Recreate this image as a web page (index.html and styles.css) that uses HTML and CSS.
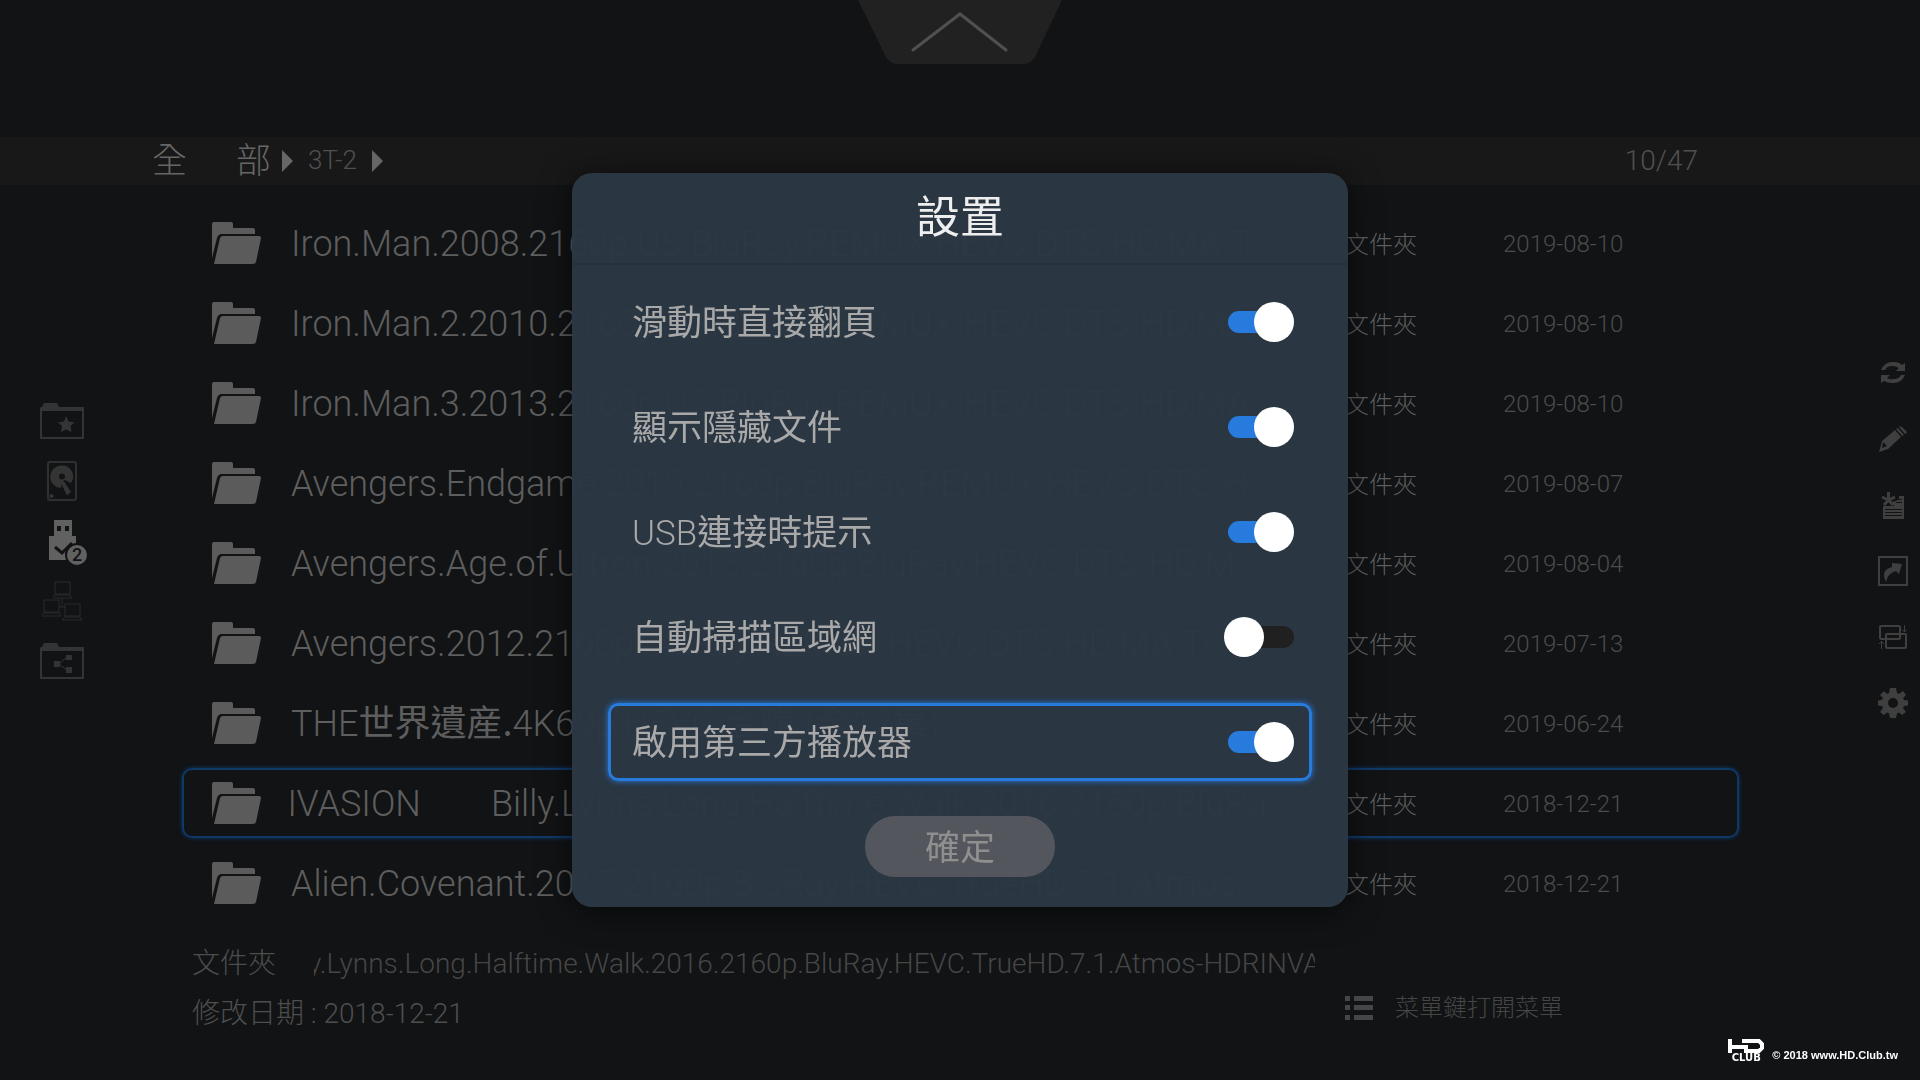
FILE: index.html
```html
<!DOCTYPE html>
<html lang="zh-Hant">
<head>
<meta charset="utf-8">
<meta name="viewport" content="width=device-width, initial-scale=1">
<title>設置</title>
<link rel="stylesheet" href="styles.css">
</head>
<body>
<svg class="sprite" aria-hidden="true">
  <symbol id="folder" viewBox="0 0 49 42">
    <path d="M2 0H19Q21 0 21 2V6H41Q43 6 43 8V12H10Q6 12 5 16L0 36V2Q0 0 2 0Z"/>
    <path d="M11 14H47Q49 14 49 16L44 40Q43 42 41 42H2L8 16Q9 14 11 14Z"/>
  </symbol>
</svg>
<div class="page">
  <button class="pull-tab" type="button" aria-label="展開">
    <svg width="204" height="64" viewBox="0 0 204 64">
      <path class="tab-shape" d="M0 0H204L177 57Q173 64 165 64H39Q32 64 28 57Z"/>
      <path class="tab-chevron" d="M55 50L102 14L148 50"/>
    </svg>
  </button>

  <header class="path">
    <nav class="crumbs">
      <a class="root" href="#"><span>全</span><span>部</span></a>
      <svg width="11" height="22" viewBox="0 0 11 22"><path d="M0 0L11 11L0 22Z"/></svg>
      <a class="crumb" href="#">3T-2</a>
      <svg width="11" height="22" viewBox="0 0 11 22"><path d="M0 0L11 11L0 22Z"/></svg>
    </nav>
    <span class="counter">10/47</span>
  </header>

  <nav class="sources">
    <button type="button" aria-label="收藏">
      <svg width="44" height="36" viewBox="0 0 44 36">
        <path fill-rule="evenodd" d="M4 0H17L19 4H43Q44 4 44 5V35Q44 36 43 36H1Q0 36 0 35V5Q0 4 2 4ZM2 8V34H42V8Z"/>
        <path d="M26 13L28.500 18.500L34.500 19.200L30.500 23L31.500 29L26 26.500L21 29L22 23L18 19.200L24 18.500Z"/>
      </svg>
    </button>
    <button type="button" aria-label="硬碟">
      <svg width="30" height="40" viewBox="0 0 30 40">
        <rect class="line bold" x="1" y="1" width="28" height="38" rx="2"/>
        <path fill-rule="evenodd" d="M15 4.500A11 11 0 0 1 24 22L17.500 19L15 21L14 27A11 11 0 0 1 15 4.500ZM15 12.500A3 3 0 1 0 15 18.500A3 3 0 1 0 15 12.500Z"/>
        <path d="M14 20.500Q15.500 19 17.500 21L24 31L20 34.500L14 22Z"/>
        <circle cx="4.500" cy="35" r="2"/>
      </svg>
    </button>
    <button class="current" type="button" aria-label="USB">
      <svg width="40" height="45" viewBox="0 0 40 45">
        <path fill-rule="evenodd" d="M6 0H24V16H28V40H1V16H6ZM9 6V11H13V6ZM17 6V11H21V6Z"/>
        <path class="cut" d="M7 27L14 33L24 23"/>
        <circle class="ring" cx="29" cy="35" r="11"/>
      </svg>
      <span class="badge">2</span>
    </button>
    <button class="faint" type="button" aria-label="網路">
      <svg width="42" height="40" viewBox="0 0 42 40">
        <g class="line">
          <rect x="14" y="1" width="15" height="12"/><path d="M12 16L14 14H29L31 17H12"/>
          <rect x="3" y="19" width="15" height="12"/><path d="M1 34L3 32H18L20 35H1"/>
          <rect x="24" y="23" width="15" height="12"/><path d="M21 39L24 36H39L41 39H21M21 17V26M18 26H24"/>
        </g>
      </svg>
    </button>
    <button type="button" aria-label="共享">
      <svg width="44" height="36" viewBox="0 0 44 36">
        <path fill-rule="evenodd" d="M4 0H17L19 4H43Q44 4 44 5V35Q44 36 43 36H1Q0 36 0 35V5Q0 4 2 4ZM2 8V34H42V8Z"/>
        <path d="M14 18H20V24H14ZM26 12H32V17H26ZM26 24H32V30H26Z"/><path class="thin" d="M19 21L28 13M19 21L28 28"/>
      </svg>
    </button>
  </nav>

  <main class="browser">
    <table class="files">
      <tbody>
        <tr><td><svg width="49" height="42"><use href="#folder"/></svg></td><td class="name">Iron.Man.2008.2160p.US.BluRay.REMUX.HEVC.DTS-HD.MA.T..</td><td class="kind">文件夾</td><td class="date">2019-08-10</td></tr>
        <tr><td><svg width="49" height="42"><use href="#folder"/></svg></td><td class="name">Iron.Man.2.2010.2160p.US.BluRay.REMUX.HEVC.DTS-HD.MA..</td><td class="kind">文件夾</td><td class="date">2019-08-10</td></tr>
        <tr><td><svg width="49" height="42"><use href="#folder"/></svg></td><td class="name">Iron.Man.3.2013.2160p.US.BluRay.REMUX.HEVC.DTS-HD.MA..</td><td class="kind">文件夾</td><td class="date">2019-08-10</td></tr>
        <tr><td><svg width="49" height="42"><use href="#folder"/></svg></td><td class="name">Avengers.Endgame.2019.2160p.BluRay.REMUX.HEVC.DTS-H..</td><td class="kind">文件夾</td><td class="date">2019-08-07</td></tr>
        <tr><td><svg width="49" height="42"><use href="#folder"/></svg></td><td class="name">Avengers.Age.of.Ultron.2015.2160p.BluRay.HEVC.DTS-HD.M..</td><td class="kind">文件夾</td><td class="date">2019-08-04</td></tr>
        <tr><td><svg width="49" height="42"><use href="#folder"/></svg></td><td class="name">Avengers.2012.2160p.BluRay.REMUX.HEVC.DTS-HD.MA.Tr..</td><td class="kind">文件夾</td><td class="date">2019-07-13</td></tr>
        <tr><td><svg width="49" height="42"><use href="#folder"/></svg></td><td class="name">THE<span class="han">世界遺産.</span>4K60p.HEVC.<span class="han">合輯</span> (<span class="han">全</span>12<span class="han">集</span>)</td><td class="kind">文件夾</td><td class="date">2019-06-24</td></tr>
        <tr class="selected"><td><svg width="49" height="42"><use href="#folder"/></svg></td><td class="name"><span class="scrolling"><span>NVASION</span><span>Billy.Lynns.Long.Halftime.Walk.2016.2160p.BluRa</span></span></td><td class="kind">文件夾</td><td class="date">2018-12-21</td></tr>
        <tr><td><svg width="49" height="42"><use href="#folder"/></svg></td><td class="name">Alien.Covenant.2017.2160p.BluRay.HEVC.TrueHD.7.1.Atmos..</td><td class="kind">文件夾</td><td class="date">2018-12-21</td></tr>
      </tbody>
    </table>
    <footer class="details">
      <span>文件夾</span>
      <span class="ticker">y.Lynns.Long.Halftime.Walk.2016.2160p.BluRay.HEVC.TrueHD.7.1.Atmos-HDRINVASION</span>
      <span class="modified">修改日期 : 2018-12-21</span>
      <span class="hint">
        <svg width="28" height="24" viewBox="0 0 28 24"><path d="M0 0H5V5H0ZM9 0H28V5H9ZM0 9H5V14H0ZM9 9H28V14H9ZM0 19H5V24H0ZM9 19H28V24H9Z"/></svg>
        菜單鍵打開菜單
      </span>
    </footer>
  </main>

  <nav class="actions">
    <button type="button" aria-label="刷新">
      <svg width="26" height="24" viewBox="0 0 26 24">
        <path d="M1 9Q5 0 14 1Q19 1 22 4L25 2V10H16L19 7Q16 5 12 5Q7 5 5 9Z"/>
        <path d="M25 14Q21 23 12 22Q7 22 4 20L1 22V14H10L7 17Q10 19 14 18Q19 18 21 14Z"/>
      </svg>
    </button>
    <button type="button" aria-label="編輯">
      <svg width="28" height="26" viewBox="0 0 28 26">
        <path fill-rule="evenodd" d="M0 26L3 15L16 4L22 11L9 23ZM3 22L8 20L4 16Z"/>
        <path d="M17 3L19 2L25 9L23 10ZM20 1Q22 0 23 1L28 6Q28 7 26 8Z"/>
      </svg>
    </button>
    <button type="button" aria-label="新建">
      <svg width="24" height="27" viewBox="0 0 24 27">
        <path fill-rule="evenodd" d="M2 14H23V27H2ZM4 17V18H21V17ZM4 20V21H21V20ZM4 23V24H21V23Z"/>
        <path d="M18 4H23V14H13L11 10L15 9L18 7ZM15 10V11H21V10ZM17 7V8H21V7Z" fill-rule="evenodd"/>
        <path class="star" d="M7.500 0V8M1 5L7.500 8L14 5M3 13L7.500 8L12 13"/>
      </svg>
    </button>
    <button type="button" aria-label="發送">
      <svg width="30" height="30" viewBox="0 0 30 30">
        <rect class="frame" x="1" y="1" width="28" height="28"/>
        <path d="M14 7L24 8L21 18L18 15Q10 17 8 26Q2 14 14 11Z"/>
      </svg>
    </button>
    <button type="button" aria-label="排序">
      <svg width="28" height="24" viewBox="0 0 28 24">
        <g class="frame"><rect x="1" y="1" width="20" height="13" rx="1"/><rect x="7" y="9" width="20" height="14" rx="1"/></g>
        <path class="thin" d="M25.500 0V7M23 4.500L25.500 7L28 4.500M2.500 24V16M0 19L2.500 16.500L5 19"/>
      </svg>
    </button>
    <button type="button" aria-label="設置">
      <svg width="30" height="30" viewBox="0 0 30 30">
        <path fill-rule="evenodd" d="M12 0H18L19 5L21 6L25 3L28 7L25 10L26 12L30 12.500V17.500L26 18L25 20L28 24L24 27L21 24.500L19 25.500L18 30H12L11 25.500L9 24.500L6 27L2 24L5 20L4 18L0 17.500V12.500L4 12L5 10L2 7L6 3L9 6L11 5ZM15 10A5 5 0 1 0 15 20A5 5 0 1 0 15 10Z"/>
      </svg>
    </button>
  </nav>
</div>

<dialog class="settings" open aria-labelledby="settings-title">
  <h1 id="settings-title">設置</h1>
  <form method="dialog">
    <label class="option"><span>滑動時直接翻頁</span><input type="checkbox" role="switch" checked></label>
    <label class="option"><span>顯示隱藏文件</span><input type="checkbox" role="switch" checked></label>
    <label class="option"><span><span class="latin">USB</span>連接時提示</span><input type="checkbox" role="switch" checked></label>
    <label class="option"><span>自動掃描區域網</span><input type="checkbox" role="switch"></label>
    <label class="option focused"><span>啟用第三方播放器</span><input type="checkbox" role="switch" checked></label>
    <button class="confirm" type="submit">確定</button>
  </form>
</dialog>

<div class="watermark">
  <span class="brand">
    <svg width="36" height="14" viewBox="0 0 36 14"><path d="M2 0V14M2 8H20M18 6V14M14 2H31L34 5V9L31 12H18"/></svg>
    <span>CLUB</span>
  </span>
  <span>© 2018 www.HD.Club.tw</span>
</div>
</body>
</html>
```
FILE: styles.css
```css
* {
  box-sizing: border-box;
}

body {
  margin: 0;
  background: #111315;
  color: #5e5e5e;
  font-family: Roboto, "Noto Sans CJK TC", sans-serif;
  font-weight: 300;
}

button {
  border: 0;
  padding: 0;
  background: none;
  font: inherit;
}

svg {
  display: block;
  fill: currentColor;
}

a {
  color: inherit;
  text-decoration: none;
}

.sprite {
  position: absolute;
  width: 0;
  height: 0;
}

/* Page frame: side rails span the full height beside the file list */
.page {
  display: grid;
  grid-template-columns: 182px minmax(0, 1fr) 181px;
  grid-template-rows: 137px 48px 1fr;
  min-height: 100vh;
}

.pull-tab {
  grid-area: 1 / 1 / 2 / -1;
  place-self: start center;
}

.tab-shape {
  fill: #212121;
}

.tab-chevron {
  fill: none;
  stroke: #505050;
  stroke-width: 3;
  stroke-linecap: round;
}

.path {
  grid-area: 2 / 1 / 3 / -1;
  display: flex;
  align-items: center;
  justify-content: space-between;
  padding: 0 222px 0 152px;
  background: #181818;
  color: #666;
}

.crumbs {
  display: flex;
  align-items: center;
  gap: 15px;
}

.root {
  display: flex;
  gap: 49px;
  padding-top: 2px;
  font-size: 35px;
  line-height: 46px;
}

.root + svg {
  margin-left: -4px;
}

.crumb,
.counter {
  padding-bottom: 2px;
  color: #505050;
}

.crumb {
  font-size: 26px;
}

.counter {
  font-size: 28px;
}

/* Side rails */
.sources,
.actions {
  grid-row: 1 / -1;
  align-self: center;
  display: grid;
}

.sources {
  grid-column: 1;
  justify-content: start;
  grid-auto-rows: 60px;
  grid-template-columns: 124px;
  padding-top: 2px;
  color: #343434;
}

.actions {
  grid-column: 3;
  justify-content: end;
  grid-auto-rows: 66px;
  grid-template-columns: 54px;
  padding-bottom: 4px;
  color: #3f3f3f;
}

.sources button,
.actions button {
  display: grid;
  place-items: center;
  color: inherit;
}

.sources .current {
  position: relative;
  padding: 2px 0 0 12px;
  color: #616161;
}

.line,
.frame,
.thin,
.star {
  fill: none;
  stroke: currentColor;
}

.line {
  stroke-width: 1;
}

.frame,
.bold {
  stroke-width: 2;
}

.star {
  stroke-width: 3;
}

.bold {
  stroke: #303030;
}

.faint .line {
  stroke: #2b2b2b;
}

.cut {
  fill: none;
  stroke: #111315;
  stroke-width: 3;
}

.ring {
  stroke: #111315;
  stroke-width: 2;
}

.badge {
  position: absolute;
  left: 67px;
  top: 34px;
  width: 20px;
  color: #111315;
  font-size: 18px;
  font-weight: 500;
  line-height: 20px;
  text-align: center;
}

/* File list */
.browser {
  grid-area: 3 / 2;
  padding-top: 23px;
}

.files,
.files tbody {
  display: grid;
  gap: 10px;
}

.files tr {
  display: grid;
  grid-template-columns: 79px minmax(0, 1fr) 158px 206px;
  align-items: center;
  height: 70px;
  padding: 0 28px;
  border: 2px solid transparent;
  border-radius: 10px;
}

.files td {
  padding: 0;
}

.files svg {
  color: #5b5b5b;
}

.files .selected {
  border-color: #103967;
  box-shadow: 0 0 4px #103967;
}

.files .name {
  overflow: hidden;
  padding-top: 2px;
  font-size: 36px;
  line-height: 48px;
  white-space: nowrap;
}

.han {
  font-family: "Noto Sans CJK TC", sans-serif;
  font-weight: 400;
  line-height: 1;
}

.scrolling {
  display: flex;
  gap: 70px;
  margin-left: -20px;
}

.kind,
.date {
  font-size: 24px;
  white-space: nowrap;
}

.files .kind {
  padding-bottom: 2px;
}

.files .date {
  padding-top: 2px;
  color: #4c4c4c;
}

.details {
  display: grid;
  grid-template-columns: 122px minmax(0, 1001px) 1fr;
  grid-template-rows: 50px 50px;
  margin-top: 21px;
  padding-left: 10px;
  font-size: 28px;
  line-height: 50px;
  color: #4e4e4e;
}

.ticker {
  overflow: hidden;
  color: #464646;
  white-space: nowrap;
  text-indent: -6px;
}

.modified {
  grid-area: 2 / 1 / 3 / 3;
}

.hint {
  grid-area: 2 / 3;
  display: flex;
  align-items: center;
  align-self: start;
  gap: 22px;
  margin-left: 30px;
  font-size: 24px;
  line-height: 38px;
  color: #464646;
}

/* Settings dialog */
.settings {
  position: fixed;
  inset: 0;
  width: 776px;
  max-width: 100%;
  height: fit-content;
  margin: auto;
  padding: 0;
  border: 0;
  border-radius: 20px;
  background: rgba(43, 55, 67, 0.98);
  box-shadow: 0 4px 32px rgba(0, 0, 0, 0.6);
  color: #a9a9a9;
}

.settings h1 {
  margin: 0;
  border-bottom: 2px solid #26313b;
  color: #eee;
  font-size: 44px;
  font-weight: 400;
  line-height: 90px;
  text-align: center;
}

.settings form {
  display: grid;
  gap: 27px;
  padding: 18px 36px 30px;
}

.option {
  display: flex;
  align-items: center;
  justify-content: space-between;
  height: 78px;
  padding: 0 16px 0 22px;
  border: 2px solid transparent;
  border-radius: 10px;
  font-size: 35px;
  font-weight: 400;
}

.option > span {
  padding-bottom: 5px;
}

.latin {
  font-weight: 300;
}

.option.focused {
  border: 3px solid #277bdd;
  padding: 0 15px 0 21px;
  box-shadow: 0 0 6px #277bdd;
}

.option input {
  appearance: none;
  display: grid;
  align-items: center;
  width: 70px;
  height: 40px;
  margin: 0;
}

.option input::before {
  content: "";
  grid-area: 1 / 1;
  height: 22px;
  margin-left: 4px;
  border-radius: 11px;
  background: #202020;
}

.option input::after {
  content: "";
  grid-area: 1 / 1;
  width: 40px;
  height: 40px;
  border-radius: 50%;
  background: #fff;
}

.option input:checked::before {
  background: #277bdd;
}

.option input:checked::after {
  justify-self: end;
}

.confirm {
  justify-self: center;
  width: 190px;
  height: 61px;
  margin-top: 8px;
  padding-bottom: 4px;
  border-radius: 30px;
  background: #54565d;
  color: #8f8f8f;
  font-size: 35px;
  font-weight: 400;
}

.watermark {
  position: fixed;
  right: 22px;
  bottom: 18px;
  display: flex;
  align-items: flex-end;
  gap: 8px;
  color: #fff;
  font: bold 11px/14px "Liberation Sans", sans-serif;
}

.brand {
  display: grid;
  justify-items: center;
  font: bold 10px/9px "DejaVu Sans", sans-serif;
}

.brand path {
  fill: none;
  stroke: currentColor;
  stroke-width: 4;
}
```
